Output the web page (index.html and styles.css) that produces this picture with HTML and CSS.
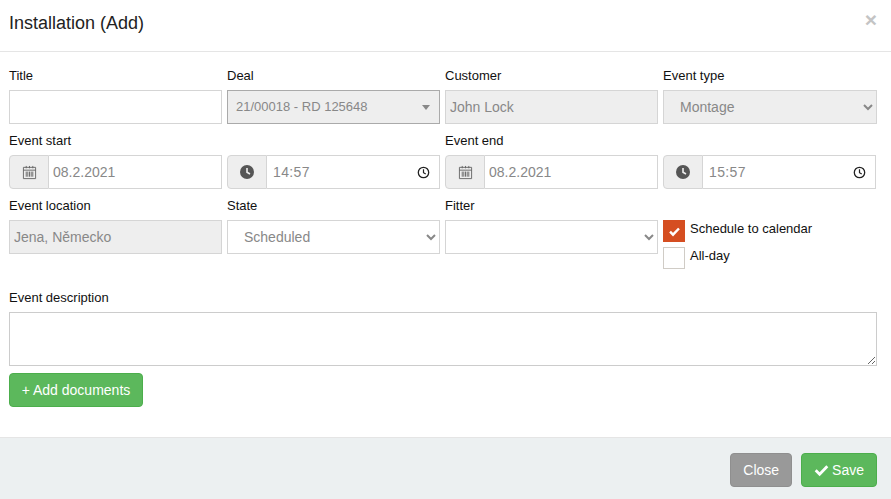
FILE: index.html
```html
<!DOCTYPE html>
<html lang="en">
<head>
<meta charset="utf-8">
<title>Installation (Add)</title>
<link rel="stylesheet" href="styles.css">
</head>
<body>
<div class="modal">
  <header class="modal-header">
    <h4 class="modal-title">Installation (Add)</h4>
    <span class="close-x">×</span>
  </header>
  <main class="modal-body">
    <div class="grid">
      <div class="field">
        <label class="label">Title</label>
        <input class="control" type="text">
      </div>
      <div class="field">
        <label class="label">Deal</label>
        <div class="control combo"><span>21/00018 - RD 125648</span><i class="caret"></i></div>
      </div>
      <div class="field">
        <label class="label">Customer</label>
        <input class="control disabled plain" type="text" value="John Lock" disabled>
      </div>
      <div class="field">
        <label class="label">Event type</label>
        <select class="control disabled select" disabled><option>Montage</option></select>
      </div>

      <div class="field">
        <label class="label">Event start</label>
        <div class="input-group">
          <span class="addon"><svg class="cal" viewBox="0 0 16 16" width="15" height="15"><path d="M1.5 2.5h13v12h-13zM1.5 5.5h13" fill="none" stroke="#666" stroke-width="1"/><path d="M4.5 1v2.5M8 1v2.5M11.5 1v2.5M4.5 7v5.5M8 7v5.5M11.5 7v5.5M6.2 7v5.5M9.8 7v5.5" stroke="#666" stroke-width="1" fill="none"/></svg></span>
          <input class="control grouped" type="text" value="08.2.2021">
        </div>
      </div>
      <div class="field">
        <label class="label spacer">&nbsp;</label>
        <div class="input-group">
          <span class="addon"><svg viewBox="0 0 14 14" width="14" height="14"><circle cx="7" cy="7" r="7" fill="#555"/><path d="M7 3v4.3l3 1.7" fill="none" stroke="#eee" stroke-width="1.6"/></svg></span>
          <div class="control grouped time"><span>14:57</span><svg viewBox="0 0 14 14" width="13" height="13"><circle cx="7" cy="7" r="5.6" fill="none" stroke="#222" stroke-width="1.4"/><path d="M7 3.6v3.6l2.4 1.4" fill="none" stroke="#222" stroke-width="1.3"/></svg></div>
        </div>
      </div>
      <div class="field">
        <label class="label">Event end</label>
        <div class="input-group">
          <span class="addon"><svg class="cal" viewBox="0 0 16 16" width="15" height="15"><path d="M1.5 2.5h13v12h-13zM1.5 5.5h13" fill="none" stroke="#666" stroke-width="1"/><path d="M4.5 1v2.5M8 1v2.5M11.5 1v2.5M4.5 7v5.5M8 7v5.5M11.5 7v5.5M6.2 7v5.5M9.8 7v5.5" stroke="#666" stroke-width="1" fill="none"/></svg></span>
          <input class="control grouped" type="text" value="08.2.2021">
        </div>
      </div>
      <div class="field">
        <label class="label spacer">&nbsp;</label>
        <div class="input-group narrow">
          <span class="addon"><svg viewBox="0 0 14 14" width="14" height="14"><circle cx="7" cy="7" r="7" fill="#555"/><path d="M7 3v4.3l3 1.7" fill="none" stroke="#eee" stroke-width="1.6"/></svg></span>
          <div class="control grouped time"><span>15:57</span><svg viewBox="0 0 14 14" width="13" height="13"><circle cx="7" cy="7" r="5.6" fill="none" stroke="#222" stroke-width="1.4"/><path d="M7 3.6v3.6l2.4 1.4" fill="none" stroke="#222" stroke-width="1.3"/></svg></div>
        </div>
      </div>

      <div class="field">
        <label class="label">Event location</label>
        <input class="control disabled plain" type="text" value="Jena, Německo" disabled>
      </div>
      <div class="field">
        <label class="label">State</label>
        <select class="control select"><option>Scheduled</option></select>
      </div>
      <div class="field">
        <label class="label">Fitter</label>
        <select class="control select"><option></option></select>
      </div>
      <div class="checks">
        <div class="check-row"><span class="box checked"><svg viewBox="0 0 14 14" width="13" height="13"><path d="M2.2 7.2l3.2 3.2 6.4-6.6" fill="none" stroke="#fff" stroke-width="2.6"/></svg></span><span>Schedule to calendar</span></div>
        <div class="check-row"><span class="box"></span><span>All-day</span></div>
      </div>
    </div>
    <div class="field description">
      <label class="label">Event description</label>
      <textarea class="control area"></textarea>
    </div>
    <button class="btn btn-green add" type="button">+ Add documents</button>
  </main>
  <footer class="modal-footer">
    <button class="btn btn-grey" type="button">Close</button>
    <button class="btn btn-green" type="button"><svg viewBox="0 0 16 14" width="15" height="14"><path d="M1.8 7.2l4.2 4.2 8.2-8.4" fill="none" stroke="#fff" stroke-width="3"/></svg>Save</button>
  </footer>
</div>
</body>
</html>
```

FILE: styles.css
```css
* { box-sizing: border-box; }

html, body { margin: 0; height: 100%; }

body {
  background: #fff;
  color: #000;
  font-family: "Liberation Sans", Arial, sans-serif;
  font-size: 14px;
  line-height: 20px;
  overflow: hidden;
}

.modal {
  display: flex;
  flex-direction: column;
  height: 499px;
}

.modal-header {
  height: 52px;
  padding: 13px 14px 0 9px;
  border-bottom: 1px solid #e5e5e5;
  display: flex;
  justify-content: space-between;
  align-items: flex-start;
}

.modal-title {
  margin: 0;
  font-size: 18px;
  font-weight: 400;
  line-height: 20px;
  color: #222;
}

.close-x {
  font-size: 21px;
  font-weight: 700;
  line-height: 14px;
  color: #c4c4c4;
}

.modal-body {
  flex: 1;
  padding: 13px 14px 0 9px;
}

.grid {
  display: grid;
  grid-template-columns: repeat(3, 213px) 1fr;
  column-gap: 5px;
  row-gap: 6px;
}

.field { display: flex; flex-direction: column; }

.label {
  display: block;
  height: 25px;
  font-size: 13px;
  line-height: 21px;
  color: #111;
}

.control {
  width: 100%;
  height: 34px;
  padding: 6px 12px;
  margin: 0;
  background: #fff;
  border: 1.5px solid #d5d5d5;
  border-radius: 0;
  font-family: inherit;
  font-size: 14px;
  color: #888;
  outline: none;
}

.disabled, .combo {
  background: #eee;
  color: #888;
  opacity: 1;
  -webkit-text-fill-color: #888;
}

.plain { padding-left: 4px; }

.combo {
  display: flex;
  align-items: center;
  justify-content: space-between;
  padding: 0 9px 0 8px;
  border-color: #aaa;
  font-size: 13px;
}

.caret {
  width: 0;
  height: 0;
  border-left: 4px solid transparent;
  border-right: 4px solid transparent;
  border-top: 5px solid #888;
}

.select { padding-left: 12px; }

.input-group { display: flex; height: 34px; }

.narrow { margin-right: 1px; }

.addon {
  flex: none;
  width: 40px;
  display: flex;
  align-items: center;
  justify-content: center;
  background: #eee;
  border: 1.5px solid #d5d5d5;
  border-right-width: 1px;
  border-radius: 4px 0 0 4px;
}

.grouped {
  flex: 1;
  min-width: 0;
  border-left: 0;
  padding-left: 4px;
}

.time {
  display: flex;
  align-items: center;
  justify-content: space-between;
  padding: 0 9px 0 6px;
  letter-spacing: 0.35px;
}

.checks {
  display: flex;
  flex-direction: column;
  gap: 5px;
  padding-top: 25px;
}

.check-row {
  display: flex;
  align-items: flex-start;
  gap: 5px;
  height: 22px;
  font-size: 13px;
  line-height: 17px;
  color: #111;
}

.box {
  flex: none;
  width: 22px;
  height: 22px;
  display: flex;
  align-items: center;
  justify-content: center;
  border: 1px solid #d0ccc6;
}

.checked {
  background: #d54e21;
  border-color: #d54e21;
}

.description { margin-top: 18px; }

.area {
  height: 54px;
  display: block;
  resize: vertical;
  border-color: #ccc;
}

.btn {
  display: inline-flex;
  align-items: center;
  justify-content: center;
  gap: 3px;
  height: 34px;
  padding: 0 12px;
  border: 1px solid transparent;
  border-radius: 4px;
  font-family: inherit;
  font-size: 14px;
  white-space: nowrap;
  color: #fff;
}

.btn-green { background: #5cb85c; border-color: #4cae4c; }
.btn-grey { background: #999; border-color: #8f8f8f; }

.add { margin-top: 7px; width: 134px; padding: 0; }

.modal-footer {
  height: 62px;
  padding: 15px 14px 0 0;
  background: #ecf0f1;
  border-top: 1px solid #e5e5e5;
  display: flex;
  justify-content: flex-end;
  gap: 9px;
}
```
